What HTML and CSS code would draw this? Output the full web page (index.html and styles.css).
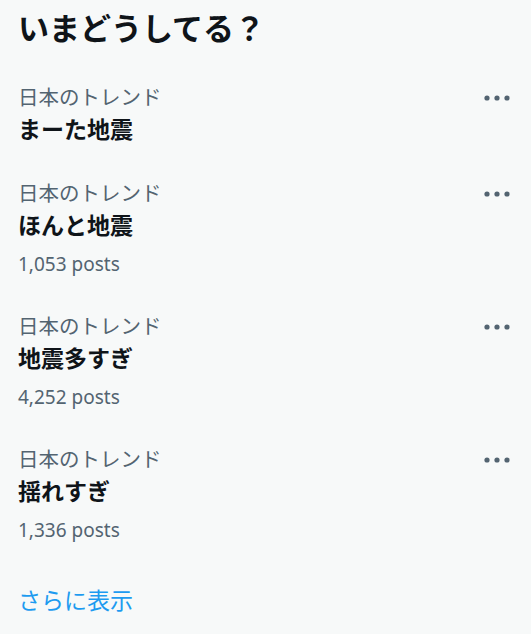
FILE: index.html
```html
<!DOCTYPE html>
<html lang="ja">
<head>
    <meta charset="UTF-8">
    <meta name="viewport" content="width=device-width, initial-scale=1.0">
    <title>いまどうしてる？</title>
    <link rel="stylesheet" href="styles.css">
</head>
<body>
    <div class="panel">
        <h2 class="panel-title">いまどうしてる？</h2>

        <div class="trend">
            <div class="trend-body">
                <div class="trend-meta">日本のトレンド</div>
                <div class="trend-name">まーた地震</div>
            </div>
            <div class="trend-more">
                <svg width="26" height="10" viewBox="0 0 26 10"><circle cx="3" cy="5" r="2.6"/><circle cx="13" cy="5" r="2.6"/><circle cx="23" cy="5" r="2.6"/></svg>
            </div>
        </div>

        <div class="trend">
            <div class="trend-body">
                <div class="trend-meta">日本のトレンド</div>
                <div class="trend-name">ほんと地震</div>
                <div class="trend-count">1,053 posts</div>
            </div>
            <div class="trend-more">
                <svg width="26" height="10" viewBox="0 0 26 10"><circle cx="3" cy="5" r="2.6"/><circle cx="13" cy="5" r="2.6"/><circle cx="23" cy="5" r="2.6"/></svg>
            </div>
        </div>

        <div class="trend">
            <div class="trend-body">
                <div class="trend-meta">日本のトレンド</div>
                <div class="trend-name">地震多すぎ</div>
                <div class="trend-count">4,252 posts</div>
            </div>
            <div class="trend-more">
                <svg width="26" height="10" viewBox="0 0 26 10"><circle cx="3" cy="5" r="2.6"/><circle cx="13" cy="5" r="2.6"/><circle cx="23" cy="5" r="2.6"/></svg>
            </div>
        </div>

        <div class="trend">
            <div class="trend-body">
                <div class="trend-meta">日本のトレンド</div>
                <div class="trend-name">揺れすぎ</div>
                <div class="trend-count">1,336 posts</div>
            </div>
            <div class="trend-more">
                <svg width="26" height="10" viewBox="0 0 26 10"><circle cx="3" cy="5" r="2.6"/><circle cx="13" cy="5" r="2.6"/><circle cx="23" cy="5" r="2.6"/></svg>
            </div>
        </div>

        <a class="show-more" href="#">さらに表示</a>
    </div>
</body>
</html>
```

FILE: styles.css
```css
body {
    margin: 0;
    background: #f7f9f9;
    font-family: "Noto Sans", "Noto Sans CJK JP", sans-serif;
    color: #0f1419;
}
.panel {
    padding: 0 21px 0 18px;
}
.panel-title {
    margin: 0;
    padding: 9px 0 20px;
    font-family: "Noto Sans CJK JP", sans-serif;
    font-size: 31px;
    line-height: 36px;
    font-weight: 700;
}
.trend {
    display: flex;
    justify-content: space-between;
    align-items: flex-start;
    padding: 16px 0;
}
.trend-meta {
    font-family: "Noto Sans CJK JP", sans-serif;
    font-size: 20.5px;
    line-height: 30px;
    color: #536471;
}
.trend-name {
    font-family: "Noto Sans CJK JP", sans-serif;
    font-size: 23px;
    line-height: 34px;
    font-weight: 700;
}
.trend-count {
    margin-top: 9px;
    font-size: 19px;
    line-height: 28px;
    color: #536471;
}
.trend-more {
    display: flex;
    align-items: center;
    height: 30px;
    margin-top: 2px;
}
.trend-more svg {
    fill: #536471;
}
.show-more {
    display: block;
    padding-top: 24px;
    font-family: "Noto Sans CJK JP", sans-serif;
    font-size: 23px;
    line-height: 30px;
    color: #1d9bf0;
    text-decoration: none;
}
```
